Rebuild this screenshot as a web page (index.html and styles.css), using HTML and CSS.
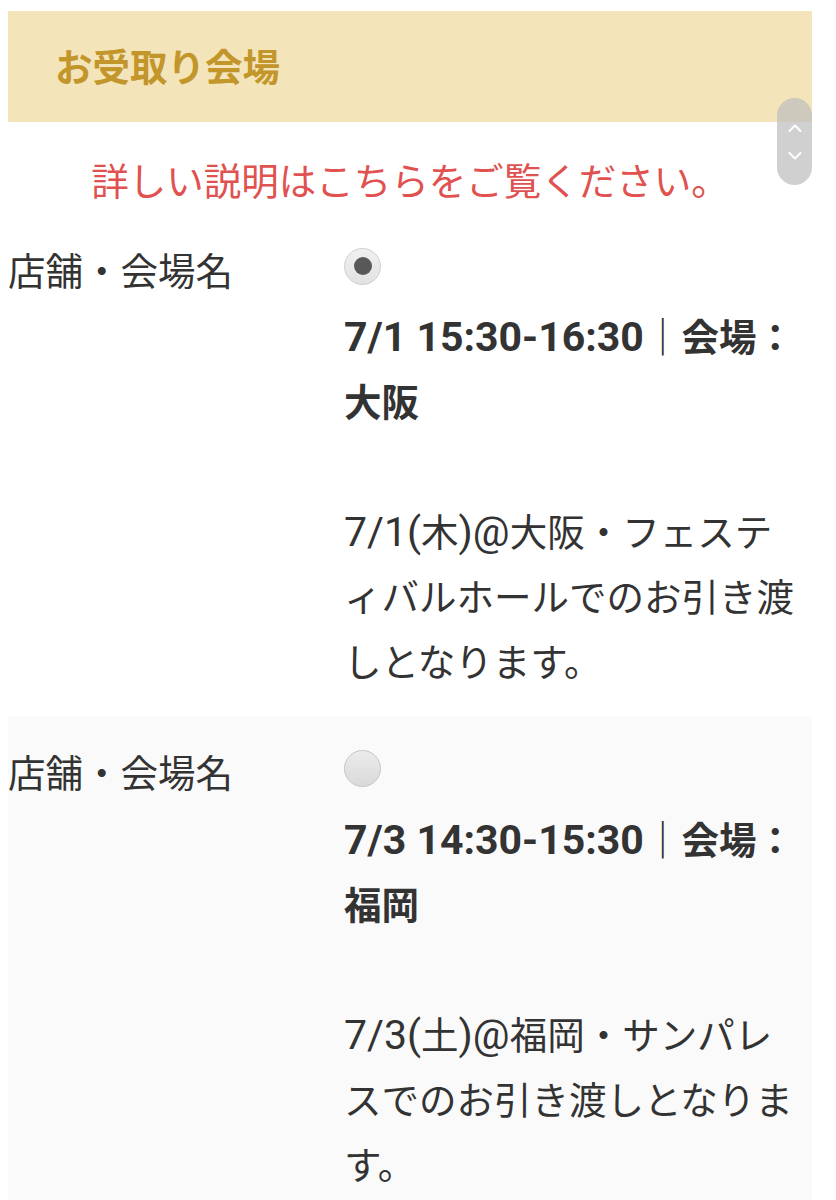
FILE: index.html
```html
<!DOCTYPE html>
<html lang="ja">
<head>
<meta charset="utf-8">
<title>お受取り会場</title>
<link rel="stylesheet" href="styles.css">
</head>
<body>
<div class="page">
  <div class="section-head"><h2 class="section-title">お受取り会場</h2></div>
  <p class="notice">詳しい説明はこちらをご覧ください。</p>
  <div class="row">
    <div class="label">店舗・会場名</div>
    <div class="choice">
      <input class="radio" type="radio" name="venue" checked>
      <div class="desc"><strong class="slot"><span class="latin">7/1 15:30-16:30</span>｜会場：大阪</strong><br><br><span class="latin">7/1(</span>木<span class="latin">)@</span>大阪・フェスティバルホールでのお引き渡しとなります。</div>
    </div>
  </div>
  <div class="row row-alt">
    <div class="label">店舗・会場名</div>
    <div class="choice">
      <input class="radio" type="radio" name="venue">
      <div class="desc"><strong class="slot"><span class="latin">7/3 14:30-15:30</span>｜会場：福岡</strong><br><br><span class="latin">7/3(</span>土<span class="latin">)@</span>福岡・サンパレスでのお引き渡しとなります。</div>
    </div>
  </div>
</div>
<div class="scroller">
  <svg class="chev" viewBox="0 0 14 8" width="14" height="8"><path d="M1.5 7 L7 1.5 L12.5 7" fill="none" stroke="#ffffff" stroke-width="2" stroke-linecap="round" stroke-linejoin="round"/></svg>
  <svg class="chev" viewBox="0 0 14 8" width="14" height="8"><path d="M1.5 1 L7 6.5 L12.5 1" fill="none" stroke="#ffffff" stroke-width="2" stroke-linecap="round" stroke-linejoin="round"/></svg>
</div>
</body>
</html>
```

FILE: styles.css
```css
html, body {
  margin: 0;
  padding: 0;
  background: #ffffff;
}
body {
  font-family: Roboto, "Noto Sans CJK JP", "Noto Sans", sans-serif;
  color: #333333;
  font-size: 37.5px;
}
.page {
  padding: 11px 24px 0 8px;
}
.section-head {
  height: 111px;
  background: #f4e4b9;
  display: flex;
  align-items: center;
  padding-left: 47px;
}
.section-title {
  margin: 0;
  font-size: 37.5px;
  font-weight: 700;
  color: #c3962b;
  line-height: 1;
  padding-top: 4px;
}
.notice {
  margin: 27.5px 0 0 0;
  line-height: 64px;
  text-align: center;
  color: #e05150;
}
.row {
  display: grid;
  grid-template-columns: 336px 1fr;
  padding: 26px 0 20px 0;
}
.row-alt {
  background: #fafafa;
  padding-bottom: 40px;
}
.label {
  line-height: 65px;
}
.choice {
  display: flex;
  flex-direction: column;
  align-items: flex-start;
}
.radio {
  -webkit-appearance: none;
  appearance: none;
  margin: 8px 0 0 0;
  width: 37px;
  height: 37px;
  border-radius: 50%;
  border: 1.5px solid #c6c6c6;
  background: linear-gradient(#ececec, #d9d9d9);
  display: flex;
  align-items: center;
  justify-content: center;
  box-sizing: border-box;
}
.radio:checked {
  background: linear-gradient(#f0f0f0, #e2e2e2);
  border-color: #cfcfcf;
}
.radio:checked::after {
  content: "";
  width: 18px;
  height: 18px;
  border-radius: 50%;
  background: #585858;
}
.desc {
  width: 456px;
  margin-top: 21.5px;
  line-height: 65px;
}
.latin {
  font-size: 41px;
  line-height: 1;
}
.slot {
  font-weight: 700;
}
.scroller {
  position: fixed;
  top: 98px;
  left: 777px;
  width: 35px;
  height: 87px;
  border-radius: 18px;
  background: rgba(190, 190, 190, 0.72);
  display: flex;
  flex-direction: column;
  align-items: center;
  justify-content: center;
  gap: 20px;
}
.chev {
  display: block;
}
```
